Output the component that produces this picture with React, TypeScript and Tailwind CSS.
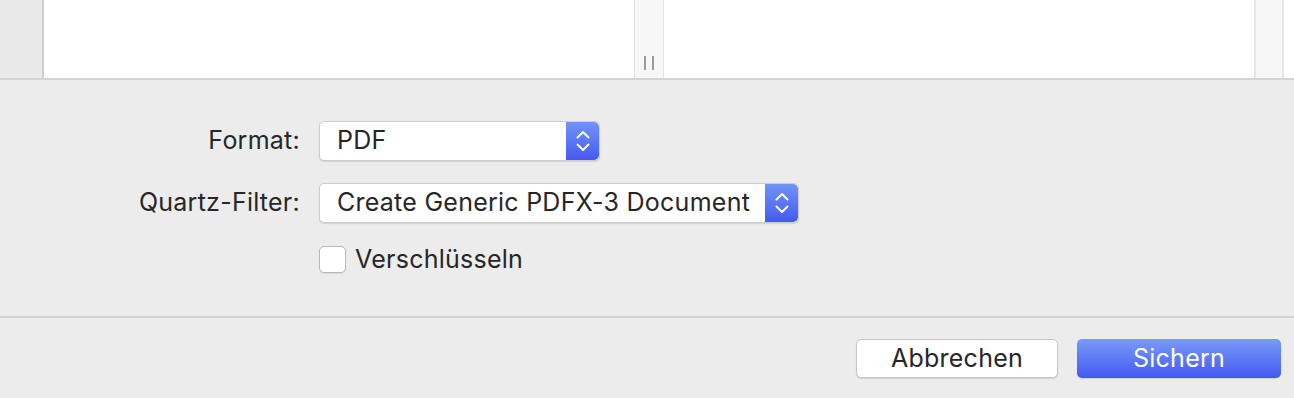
import React from "react"

const font = { fontFamily: "Inter, 'Noto Sans', sans-serif" }

function Stepper() {
  return (
    <div className="flex h-full w-[33px] items-center justify-center rounded-r-[5px] bg-gradient-to-b from-[#7193f8] to-[#4659ef]">
      <svg width="14" height="22" viewBox="0 0 14 22" fill="none" stroke="white" strokeWidth="2" strokeLinecap="round" strokeLinejoin="round">
        <path d="M1.5 7.5 L7 2 L12.5 7.5" />
        <path d="M1.5 14.5 L7 20 L12.5 14.5" />
      </svg>
    </div>
  )
}

function Popup({ label, width }: { label: string; width: string }) {
  return (
    <div
      className={`flex h-[40px] ${width} items-stretch rounded-[5px] border border-[#cdcdcd] bg-white shadow-[0_1px_1px_rgba(0,0,0,0.12)]`}
    >
      <div className="flex flex-1 items-center pl-[17px] text-[25px] text-[#262626]">{label}</div>
      <Stepper />
    </div>
  )
}

function ColumnGrip() {
  return (
    <div className="flex w-[30px] items-end justify-center gap-[6px] border-x border-[#e3e3e3] bg-[#f7f7f7] pb-[8px]">
      <div className="h-[14px] w-[2px] bg-[#9a9a9a]" />
      <div className="h-[14px] w-[2px] bg-[#9a9a9a]" />
    </div>
  )
}

export default function App() {
  return (
    <div className="flex h-[398px] w-[1294px] flex-col overflow-hidden bg-[#ececec] tracking-[0.25px]" style={font}>
      {/* browser columns */}
      <div className="flex h-[80px] border-b-2 border-[#d3d3d3]">
        <div className="w-[42px] bg-[#e9e9e9]" />
        <div className="w-[2px] bg-[#cfcfcf]" />
        <div className="w-[590px] bg-white" />
        <ColumnGrip />
        <div className="w-[590px] bg-white" />
        <div className="w-[30px] border-x-2 border-[#e5e5e5] bg-[#f7f7f7]" />
        <div className="flex-1 bg-white" />
      </div>

      {/* options */}
      <div className="grid h-[236px] grid-cols-[300px_1fr] content-start gap-x-[19px] pt-[41px] text-[25px] text-[#262626]">
        <div className="flex h-[40px] items-center justify-end">Format:</div>
        <Popup label="PDF" width="w-[281px]" />
        <div className="mt-[22px] flex h-[40px] items-center justify-end">Quartz-Filter:</div>
        <div className="mt-[22px]">
          <Popup label="Create Generic PDFX-3 Document" width="w-[480px]" />
        </div>
        <div />
        <div className="mt-[18px] flex items-center gap-[9px]">
          <div className="h-[27px] w-[27px] rounded-[5px] border border-[#b8b8b8] bg-white shadow-[0_1px_1px_rgba(0,0,0,0.08)]" />
          <span>Verschlüsseln</span>
        </div>
      </div>

      <div className="h-[2px] bg-[#d3d3d3]" />

      {/* buttons */}
      <div className="flex justify-end gap-[19px] pr-[13px] pt-[21px]">
        <button className="h-[39px] w-[202px] rounded-[5px] border border-[#c6c6c6] bg-white text-[25px] text-[#262626] shadow-[0_1px_1px_rgba(0,0,0,0.12)]">
          Abbrechen
        </button>
        <button className="h-[39px] w-[204px] rounded-[5px] bg-gradient-to-b from-[#7a9af8] to-[#4557ef] text-[25px] text-white shadow-[0_1px_1px_rgba(0,0,0,0.12)]">
          Sichern
        </button>
      </div>
    </div>
  )
}
